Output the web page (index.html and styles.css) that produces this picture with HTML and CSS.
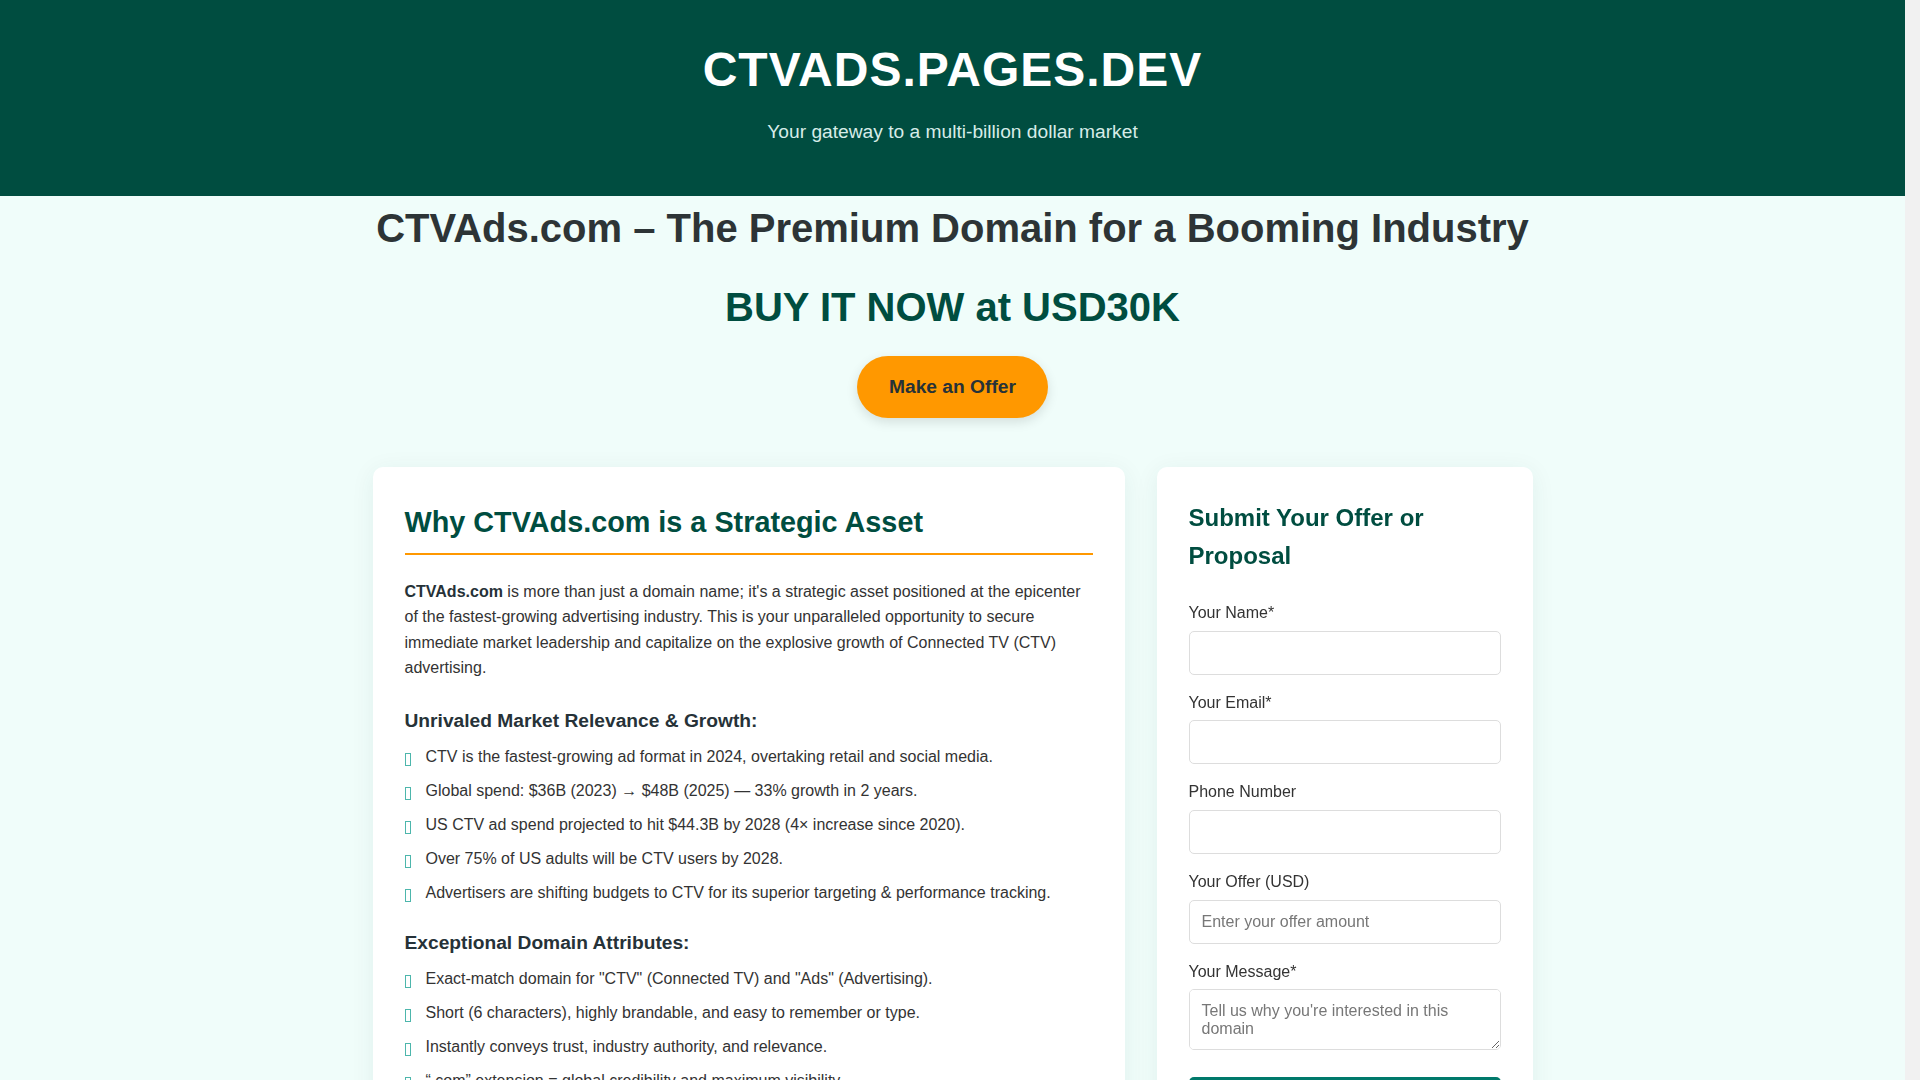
FILE: index.html
```html
<!DOCTYPE html>
<html lang="en">
<head>
<meta charset="utf-8">
<title>CTVAds.com – Premium Domain For Sale</title>
<link rel="stylesheet" href="styles.css">
</head>
<body>
<header class="site-header">
  <h1 class="site-title">CTVADS.PAGES.DEV</h1>
  <p class="site-tagline">Your gateway to a multi-billion dollar market</p>
</header>

<main class="page">
  <section class="hero">
    <h1 class="hero-title">CTVAds.com – The Premium Domain for a Booming Industry</h1>
    <h2 class="hero-price">BUY IT NOW at USD30K</h2>
    <a class="offer-btn" href="#offer">Make an Offer</a>
  </section>

  <div class="columns">
    <section class="card info-card">
      <h2 class="card-title underlined">Why CTVAds.com is a Strategic Asset</h2>
      <p class="intro"><strong>CTVAds.com</strong> is more than just a domain name; it's a strategic asset positioned at the epicenter of the fastest-growing advertising industry. This is your unparalleled opportunity to secure immediate market leadership and capitalize on the explosive growth of Connected TV (CTV) advertising.</p>

      <h3 class="sub-title">Unrivaled Market Relevance &amp; Growth:</h3>
      <ul class="check-list">
        <li>CTV is the fastest-growing ad format in 2024, overtaking retail and social media.</li>
        <li>Global spend: $36B (2023) → $48B (2025) — 33% growth in 2 years.</li>
        <li>US CTV ad spend projected to hit $44.3B by 2028 (4× increase since 2020).</li>
        <li>Over 75% of US adults will be CTV users by 2028.</li>
        <li>Advertisers are shifting budgets to CTV for its superior targeting &amp; performance tracking.</li>
      </ul>

      <h3 class="sub-title">Exceptional Domain Attributes:</h3>
      <ul class="check-list">
        <li>Exact-match domain for "CTV" (Connected TV) and "Ads" (Advertising).</li>
        <li>Short (6 characters), highly brandable, and easy to remember or type.</li>
        <li>Instantly conveys trust, industry authority, and relevance.</li>
        <li>“.com” extension = global credibility and maximum visibility.</li>
      </ul>

      <h3 class="sub-title">Ideal For:</h3>
      <ul class="check-list">
        <li>CTV ad networks, DSPs and SSPs.</li>
        <li>Streaming platforms and OTT publishers.</li>
        <li>Ad-tech startups and marketing agencies.</li>
      </ul>
    </section>

    <section class="card form-card" id="offer">
      <h2 class="card-title">Submit Your Offer or Proposal</h2>
      <form class="offer-form">
        <div class="field">
          <label for="name">Your Name*</label>
          <input id="name" type="text">
        </div>
        <div class="field">
          <label for="email">Your Email*</label>
          <input id="email" type="email">
        </div>
        <div class="field">
          <label for="phone">Phone Number</label>
          <input id="phone" type="tel">
        </div>
        <div class="field">
          <label for="amount">Your Offer (USD)</label>
          <input id="amount" type="text" placeholder="Enter your offer amount">
        </div>
        <div class="field">
          <label for="message">Your Message*</label>
          <textarea id="message" rows="2" placeholder="Tell us why you're interested in this domain"></textarea>
        </div>
        <button class="submit-btn" type="button">Submit Offer</button>
      </form>
    </section>
  </div>
</main>
</body>
</html>
```
FILE: styles.css
```css
* { box-sizing: border-box; }

html {
  margin: 0;
  padding: 0;
  background: #f1f1f1;
}

body {
  margin: 0 15px 0 0;
  padding: 0 0 60px;
  font-family: "Liberation Sans", Arial, Helvetica, sans-serif;
  font-size: 16px;
  line-height: 1.6;
  color: #333;
  background: #f0fdfa;
}

.site-header {
  background: #004d40;
  color: #fff;
  text-align: center;
  padding: 32px 16px 30px;
}

.site-title {
  margin: 0;
  font-size: 48px;
  line-height: 1.6;
  font-weight: 700;
  letter-spacing: 1px;
}

.site-tagline {
  margin: 8px 0 18px;
  font-size: 19.2px;
  color: #d7ece8;
}

.page {
  max-width: 1160px;
  margin: 0 auto;
}

.hero {
  text-align: center;
}

.hero-title {
  margin: 0 0 15px;
  font-size: 40px;
  line-height: 1.6;
  color: #2d3436;
}

.hero-price {
  margin: 0 0 17px;
  font-size: 40px;
  line-height: 1.6;
  color: #004d40;
}

.offer-btn {
  display: inline-block;
  background: #ff9800;
  color: #263238;
  font-weight: 700;
  font-size: 19.2px;
  line-height: 32px;
  padding: 15px 32px;
  border-radius: 50px;
  text-decoration: none;
  box-shadow: 0 4px 12px rgba(0, 0, 0, 0.12);
}

.columns {
  display: grid;
  grid-template-columns: 2fr 1fr;
  gap: 32px;
  margin-top: 49px;
  align-items: start;
}

.card {
  background: #fff;
  border-radius: 10px;
  padding: 32px;
  box-shadow: 0 4px 24px rgba(0, 77, 64, 0.07);
}

.card-title {
  margin: 0 0 24px;
  color: #004d40;
  line-height: 1.6;
}

.info-card .card-title {
  font-size: 28.8px;
}

.underlined {
  padding-bottom: 8px;
  border-bottom: 2px solid #ff9800;
}

.form-card .card-title {
  font-size: 24px;
  margin-bottom: 25px;
}

.intro {
  margin: 0 0 25px;
}

.intro strong {
  color: #263238;
}

.sub-title {
  margin: 0 0 7px;
  font-size: 19.2px;
  line-height: 1.6;
  color: #263238;
}

.check-list {
  list-style: none;
  margin: 0 0 23px;
  padding: 0;
}

.check-list li {
  position: relative;
  padding-left: 21px;
  margin-bottom: 8.4px;
}

.check-list li::before {
  content: "";
  position: absolute;
  left: 0;
  top: 9px;
  width: 4px;
  height: 11px;
  border: 1px solid #4db6ac;
}

.field {
  margin-bottom: 15px;
}

.field label {
  display: block;
  margin-bottom: 5px;
  color: #333;
}

.field input,
.field textarea {
  display: block;
  width: 100%;
  font-family: inherit;
  font-size: 16px;
  line-height: normal;
  padding: 12px;
  border: 1px solid #ddd;
  border-radius: 5px;
  background: #fff;
  color: #333;
}

.field textarea {
  height: 61px;
  resize: vertical;
}

.field input::placeholder,
.field textarea::placeholder {
  color: #777;
}

.submit-btn {
  display: block;
  width: 100%;
  margin-top: 27px;
  padding: 14px;
  font-family: inherit;
  font-size: 17.6px;
  font-weight: 700;
  color: #fff;
  background: #00796b;
  border: none;
  border-radius: 5px;
}
```
